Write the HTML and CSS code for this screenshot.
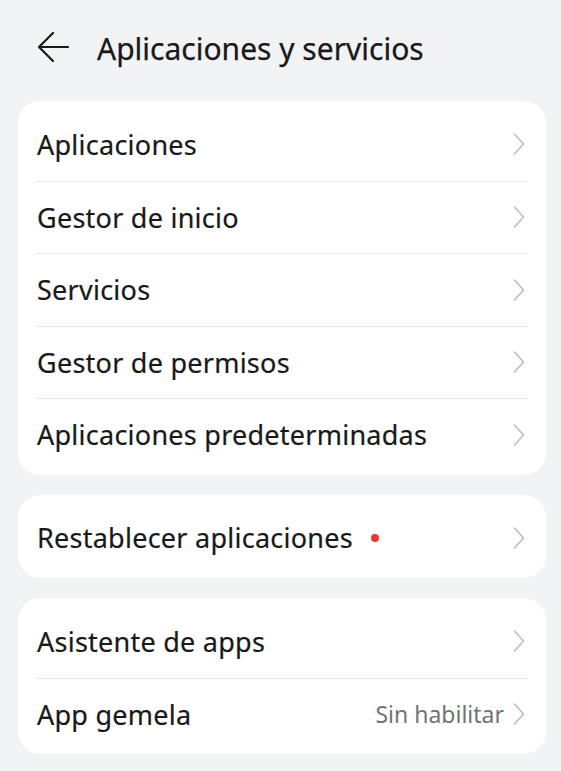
FILE: index.html
```html
<!DOCTYPE html>
<html lang="es">
<head>
<meta charset="utf-8">
<title>Aplicaciones y servicios</title>
<link rel="stylesheet" href="styles.css">
</head>
<body>
<header class="header">
  <svg class="back" width="32" height="32" viewBox="0 0 32 32" aria-hidden="true">
    <path d="M30 15H2M15 1L1 15L15 29" fill="none" stroke="#1a1a1a" stroke-width="2.2" stroke-linecap="round" stroke-linejoin="round"/>
  </svg>
  <h1 class="title">Aplicaciones y servicios</h1>
</header>
<main class="content">
  <section class="card">
    <div class="row"><span class="label">Aplicaciones</span><svg class="chev" width="12" height="22" viewBox="0 0 12 22" aria-hidden="true"><path d="M1.5 1L10.5 11L1.5 21" fill="none" stroke="#bdbdbd" stroke-width="1.6" stroke-linecap="round" stroke-linejoin="round"/></svg></div>
    <div class="row"><span class="label">Gestor de inicio</span><svg class="chev" width="12" height="22" viewBox="0 0 12 22" aria-hidden="true"><path d="M1.5 1L10.5 11L1.5 21" fill="none" stroke="#bdbdbd" stroke-width="1.6" stroke-linecap="round" stroke-linejoin="round"/></svg></div>
    <div class="row"><span class="label">Servicios</span><svg class="chev" width="12" height="22" viewBox="0 0 12 22" aria-hidden="true"><path d="M1.5 1L10.5 11L1.5 21" fill="none" stroke="#bdbdbd" stroke-width="1.6" stroke-linecap="round" stroke-linejoin="round"/></svg></div>
    <div class="row"><span class="label">Gestor de permisos</span><svg class="chev" width="12" height="22" viewBox="0 0 12 22" aria-hidden="true"><path d="M1.5 1L10.5 11L1.5 21" fill="none" stroke="#bdbdbd" stroke-width="1.6" stroke-linecap="round" stroke-linejoin="round"/></svg></div>
    <div class="row"><span class="label">Aplicaciones predeterminadas</span><svg class="chev" width="12" height="22" viewBox="0 0 12 22" aria-hidden="true"><path d="M1.5 1L10.5 11L1.5 21" fill="none" stroke="#bdbdbd" stroke-width="1.6" stroke-linecap="round" stroke-linejoin="round"/></svg></div>
  </section>
  <section class="card">
    <div class="row"><span class="label">Restablecer aplicaciones</span><span class="dot"></span><svg class="chev" width="12" height="22" viewBox="0 0 12 22" aria-hidden="true"><path d="M1.5 1L10.5 11L1.5 21" fill="none" stroke="#bdbdbd" stroke-width="1.6" stroke-linecap="round" stroke-linejoin="round"/></svg></div>
  </section>
  <section class="card">
    <div class="row"><span class="label">Asistente de apps</span><svg class="chev" width="12" height="22" viewBox="0 0 12 22" aria-hidden="true"><path d="M1.5 1L10.5 11L1.5 21" fill="none" stroke="#bdbdbd" stroke-width="1.6" stroke-linecap="round" stroke-linejoin="round"/></svg></div>
    <div class="row"><span class="label">App gemela</span><span class="value">Sin habilitar</span><svg class="chev" width="12" height="22" viewBox="0 0 12 22" aria-hidden="true"><path d="M1.5 1L10.5 11L1.5 21" fill="none" stroke="#bdbdbd" stroke-width="1.6" stroke-linecap="round" stroke-linejoin="round"/></svg></div>
  </section>
</main>
</body>
</html>
```
FILE: styles.css
```css
html, body {
  margin: 0;
  padding: 0;
  background: #f1f3f5;
  font-family: "Noto Sans", "Liberation Sans", sans-serif;
  color: #191919;
}
.header {
  height: 96px;
  display: flex;
  align-items: center;
  padding-left: 38px;
  gap: 27px;
}
.back {
  display: block;
  flex: none;
}
.title {
  margin: 0;
  font-size: 30px;
  font-weight: 400;
  -webkit-text-stroke: 0.25px #191919;
}
.content {
  margin: 5px 15px 0 18px;
  display: flex;
  flex-direction: column;
  gap: 20px;
}
.card {
  background: #ffffff;
  border-radius: 22px;
  padding: 7px 18px 4px;
}
.row {
  height: 72.5px;
  display: flex;
  align-items: center;
  box-sizing: border-box;
}
.row + .row {
  border-top: 1px solid #e6e6e6;
}
.label {
  font-size: 27px;
  font-weight: 400;
  letter-spacing: 0.25px;
  flex: none;
  padding-left: 1px;
  -webkit-text-stroke: 0.2px #191919;
}
.dot {
  width: 8px;
  height: 8px;
  border-radius: 50%;
  background: #e8382f;
  margin-left: 18px;
  flex: none;
}
.value {
  margin-left: auto;
  font-size: 23px;
  color: #737373;
  margin-right: 9px;
}
.chev {
  display: block;
  margin-left: auto;
  margin-right: 3px;
  flex: none;
}
.value + .chev {
  margin-left: 0;
}
```
